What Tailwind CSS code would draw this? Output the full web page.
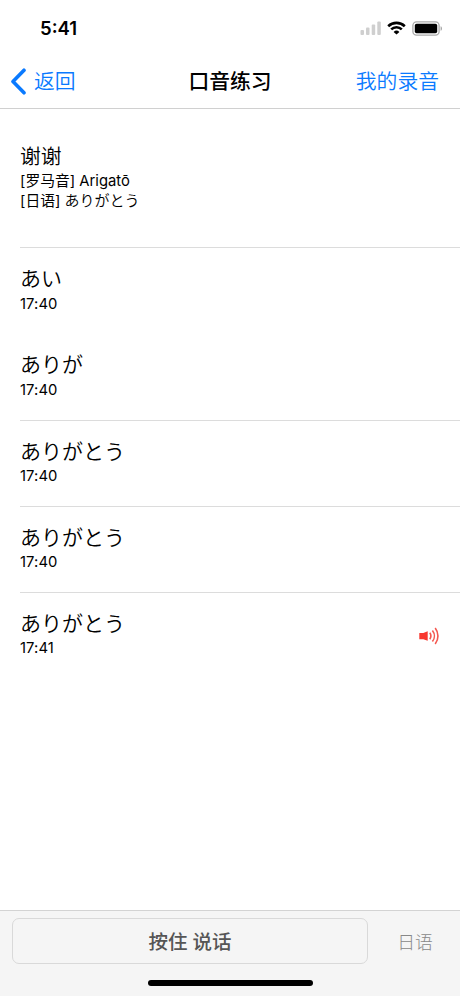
<!DOCTYPE html>
<html lang="zh-CN">
<head>
  <meta charset="UTF-8">
  <meta name="viewport" content="width=device-width, initial-scale=1.0">
  <title>口音练习</title>
  <script src="https://cdn.jsdelivr.net/npm/@tailwindcss/browser@4"></script>
</head>
<body class="bg-white text-black font-['Inter','Noto_Sans_CJK_SC',sans-serif]">
  <div class="flex flex-col w-[460px] h-[996px] overflow-hidden">
    <!-- Status bar -->
    <div class="flex items-center justify-between h-14 pl-10 pr-[17px] shrink-0">
      <span class="text-[18.5px] font-semibold leading-none">5:41</span>
      <div class="flex items-center">
        <svg class="w-[22px] h-[14px]" viewBox="0 0 22 14" fill="#cfcfcf">
          <rect x="0.5" y="9" width="3.5" height="5" rx="1"/>
          <rect x="6" y="6.5" width="3.5" height="7.5" rx="1"/>
          <rect x="11.7" y="3.5" width="3.5" height="10.5" rx="1"/>
          <rect x="17.3" y="0.5" width="3.5" height="13.5" rx="1"/>
        </svg>
        <svg class="w-[19px] h-[14px] ml-[5px]" viewBox="0 0 19 14">
          <path d="M1.2 5.2a12 12 0 0 1 16.6 0M4.2 8.4a7.6 7.6 0 0 1 10.6 0" fill="none" stroke="#000" stroke-width="2.6"/>
          <path d="M9.5 13.6 6.6 10.9a4.2 4.2 0 0 1 5.8 0z" fill="#000"/>
        </svg>
        <svg class="w-[31px] h-[15px] ml-[6px]" viewBox="0 0 31 15">
          <rect x="0.9" y="0.9" width="26.2" height="13.2" rx="3.6" fill="none" stroke="#a9a9a9" stroke-width="1.3"/>
          <rect x="2.8" y="2.8" width="22.4" height="9.4" rx="1.8" fill="#000"/>
          <path d="M28.6 5.2c1.8.7 1.8 3.9 0 4.6z" fill="#a0a0a0"/>
        </svg>
      </div>
    </div>

    <!-- Navigation bar -->
    <header class="grid grid-cols-[1fr_auto_1fr] items-center h-[53px] pl-[10px] pr-[21px] pt-px border-b border-[#d0d0d0] text-[20.8px] leading-none shrink-0">
      <a class="flex items-center text-[#0a7aff] font-[350]">
        <svg class="w-4 h-[27px] mr-2 mb-[3px]" viewBox="0 0 16 27" fill="none" stroke="#0a7aff" stroke-width="3.6" stroke-linecap="round" stroke-linejoin="round">
          <path d="M14 2.2 3 13.5l11 11.3"/>
        </svg>
        <span>返回</span>
      </a>
      <h1 class="font-medium pl-[11px]">口音练习</h1>
      <a class="text-[#0a7aff] font-[350] text-right">我的录音</a>
    </header>

    <!-- Recordings -->
    <main class="grow pl-5 text-[14.8px] leading-5">
      <div class="h-[139px] pt-[33px] border-b border-[#dcdcdc]">
        <p class="text-[20.8px] leading-[29px] font-[350]">谢谢</p>
        <p>[罗马音] Arigatō</p>
        <p class="leading-[18px]">[日语] <span lang="ja" class="text-[15px] font-[350] font-['Noto_Sans_CJK_JP',sans-serif]">ありがとう</span></p>
      </div>
      <div class="h-[86px] pt-[15px]">
        <p lang="ja" class="text-[21px] leading-7 font-[350] font-['Noto_Sans_CJK_JP',sans-serif]">あい</p>
        <p class="pt-[3px] tracking-[0.1px]">17:40</p>
      </div>
      <div class="h-[87px] pt-[15px] border-b border-[#dcdcdc]">
        <p lang="ja" class="text-[21px] leading-7 font-[350] font-['Noto_Sans_CJK_JP',sans-serif]">ありが</p>
        <p class="pt-[3px] tracking-[0.1px]">17:40</p>
      </div>
      <div class="h-[86px] pt-[15px] border-b border-[#dcdcdc]">
        <p lang="ja" class="text-[21px] leading-7 font-[350] font-['Noto_Sans_CJK_JP',sans-serif]">ありがとう</p>
        <p class="pt-[2px] tracking-[0.1px]">17:40</p>
      </div>
      <div class="h-[86px] pt-[15px] border-b border-[#dcdcdc]">
        <p lang="ja" class="text-[21px] leading-7 font-[350] font-['Noto_Sans_CJK_JP',sans-serif]">ありがとう</p>
        <p class="pt-[2px] tracking-[0.1px]">17:40</p>
      </div>
      <div class="flex items-center justify-between h-[86px] pr-5">
        <div class="pb-[6px]">
          <p lang="ja" class="text-[21px] leading-7 font-[350] font-['Noto_Sans_CJK_JP',sans-serif]">ありがとう</p>
          <p class="pt-[2px] tracking-[0.1px]">17:41</p>
        </div>
        <svg class="w-[21px] h-[18px]" viewBox="0 0 21 18">
          <path d="M0.3 6h4L8.7 4.2v9.6l-4.4-1.6h-4z" fill="#f8382f"/>
          <path d="M10.8 5.8a5.6 5.6 0 0 1 0 6.4M13.4 3.4a9 9 0 0 1 0 11.2M16.2 1a13 13 0 0 1 0 16" fill="none" stroke="#f4574f" stroke-width="1.6"/>
        </svg>
      </div>
    </main>

    <!-- Talk bar -->
    <footer class="h-[86px] pl-3 bg-[#f5f5f5] border-t border-[#d3d3d3] shrink-0">
      <div class="flex pt-[7px]">
        <button class="w-[356px] h-[46px] pt-1 rounded-[7px] border border-[#d9d9d9] text-[19.5px] font-medium text-[#555]">按住 说话</button>
        <span class="grow h-[46px] pt-0.5 pl-0.5 leading-[46px] text-center text-[17.8px] font-light text-[#888]">日语</span>
      </div>
      <div class="w-[165px] h-1.5 mt-4 ml-[136px] rounded-full bg-black"></div>
    </footer>
  </div>
</body>
</html>
